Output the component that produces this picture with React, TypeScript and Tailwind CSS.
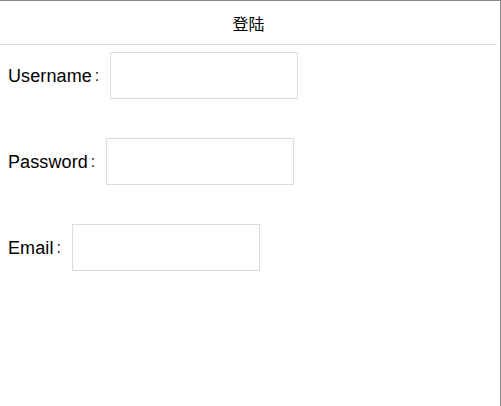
import React from "react";

function Row({ label }: { label: string }) {
  return (
    <div className="flex items-center pl-2">
      <span className="text-[18px] text-black leading-none font-['Liberation_Sans',Arial,sans-serif] tracking-[0.1px]">
        {label}
      </span>
      <span className="w-[18px] pl-[3px] text-[16px] leading-none text-[#222] font-['Liberation_Sans',Arial,sans-serif]">:</span>
      <input className="w-[188px] h-[47px] border border-[#dcdcdc] bg-white outline-none" />
    </div>
  );
}

export default function App() {
  return (
    <div className="w-[501px] h-[406px] bg-white border-t border-r border-[#8a8a8a] overflow-hidden font-['Liberation_Sans','Noto_Sans_CJK_SC',sans-serif]">
      <div className="w-[497px] h-[44px] border-b border-[#dcdcdc] flex items-center justify-center">
        <span className="text-[16px] text-black font-['Noto_Sans_CJK_SC',sans-serif]">登陆</span>
      </div>
      <div className="flex flex-col gap-[39px] pt-[7px]">
        <Row label="Username" />
        <Row label="Password" />
        <Row label="Email" />
      </div>
    </div>
  );
}
